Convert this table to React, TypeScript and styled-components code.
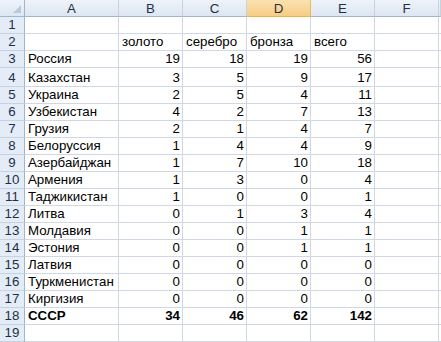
import React from "react";
import styled, { createGlobalStyle, css } from "styled-components";

const GlobalStyle = createGlobalStyle`
  body {
    margin: 0;
    background: #ffffff;
    font-family: "Liberation Sans", Arial, sans-serif;
  }
`;

const COLUMNS = "25px 94px repeat(5, 64px) 1fr";
const LETTERS = ["A", "B", "C", "D", "E", "F", ""];

type Value = string | number;
type RowData = { cells: Value[]; bold?: boolean; height?: number };

const medals: RowData[] = [
  { cells: [] },
  { cells: ["", "золото", "серебро", "бронза", "всего"] },
  { cells: ["Россия", 19, 18, 19, 56] },
  { cells: ["Казахстан", 3, 5, 9, 17], height: 19 },
  { cells: ["Украина", 2, 5, 4, 11] },
  { cells: ["Узбекистан", 4, 2, 7, 13] },
  { cells: ["Грузия", 2, 1, 4, 7] },
  { cells: ["Белоруссия", 1, 4, 4, 9] },
  { cells: ["Азербайджан", 1, 7, 10, 18] },
  { cells: ["Армения", 1, 3, 0, 4] },
  { cells: ["Таджикистан", 1, 0, 0, 1] },
  { cells: ["Литва", 0, 1, 3, 4] },
  { cells: ["Молдавия", 0, 0, 1, 1] },
  { cells: ["Эстония", 0, 0, 1, 1] },
  { cells: ["Латвия", 0, 0, 0, 0] },
  { cells: ["Туркменистан", 0, 0, 0, 0] },
  { cells: ["Киргизия", 0, 0, 0, 0] },
  { cells: ["СССР", 34, 46, 62, 142], bold: true },
  { cells: [] },
];

const Sheet = styled.div`
  width: 441px;
  overflow: hidden;
  font-size: 13.3px;
  color: #000000;
`;

const Row = styled.div<{ $height: number }>`
  display: grid;
  grid-template-columns: ${COLUMNS};
  height: ${(p) => p.$height}px;
`;

const HeaderBase = css`
  box-sizing: border-box;
  display: flex;
  align-items: center;
  justify-content: center;
  color: #27415f;
  background: linear-gradient(#eef3fa, #dde6f2);
`;

const Corner = styled.div`
  ${HeaderBase};
  position: relative;
  border-right: 1px solid #9eb6ce;
  border-bottom: 1px solid #9eb6ce;
  svg {
    position: absolute;
    right: 3px;
    bottom: 3px;
  }
`;

const ColHeader = styled.div<{ $active?: boolean }>`
  ${HeaderBase};
  color: #1f2f45;
  border-right: 1px solid #c5d2e2;
  border-bottom: 1px solid #9eb6ce;
  ${(p) =>
    p.$active &&
    css`
      background: linear-gradient(#fbe2b2, #f6cd83);
      border-right-color: #f0b85c;
      border-bottom-color: #f2b04b;
    `}
`;

const RowHeader = styled.div`
  ${HeaderBase};
  background: #e4ecf7;
  color: #1f2f45;
  border-right: 1px solid #9eb6ce;
  border-bottom: 1px solid #c5d2e2;
  align-items: flex-end;
  line-height: 16px;
`;

const Cell = styled.div<{ $numeric?: boolean; $bold?: boolean }>`
  box-sizing: border-box;
  display: flex;
  align-items: flex-end;
  justify-content: ${(p) => (p.$numeric ? "flex-end" : "flex-start")};
  padding: 0 2px 0 3px;
  line-height: 16px;
  white-space: nowrap;
  overflow: visible;
  font-weight: ${(p) => (p.$bold ? "bold" : "normal")};
  border-right: 1px solid #d0d7e5;
  border-bottom: 1px solid #d0d7e5;
`;

function CornerMark() {
  return (
    <svg width="8" height="8" viewBox="0 0 8 8">
      <polygon points="8,0 8,8 0,8" fill="#b9c9dd" />
    </svg>
  );
}

export default function App() {
  return (
    <>
      <GlobalStyle />
      <Sheet>
        <Row $height={17}>
          <Corner>
            <CornerMark />
          </Corner>
          {LETTERS.map((letter, i) => (
            <ColHeader key={i} $active={letter === "D"}>
              {letter}
            </ColHeader>
          ))}
        </Row>
        {medals.map((row, r) => (
          <Row key={r} $height={row.height ?? 17}>
            <RowHeader>{r + 1}</RowHeader>
            {LETTERS.map((_, c) => {
              const value = row.cells[c];
              return (
                <Cell
                  key={c}
                  $numeric={typeof value === "number"}
                  $bold={row.bold}
                >
                  {value ?? ""}
                </Cell>
              );
            })}
          </Row>
        ))}
      </Sheet>
    </>
  );
}
